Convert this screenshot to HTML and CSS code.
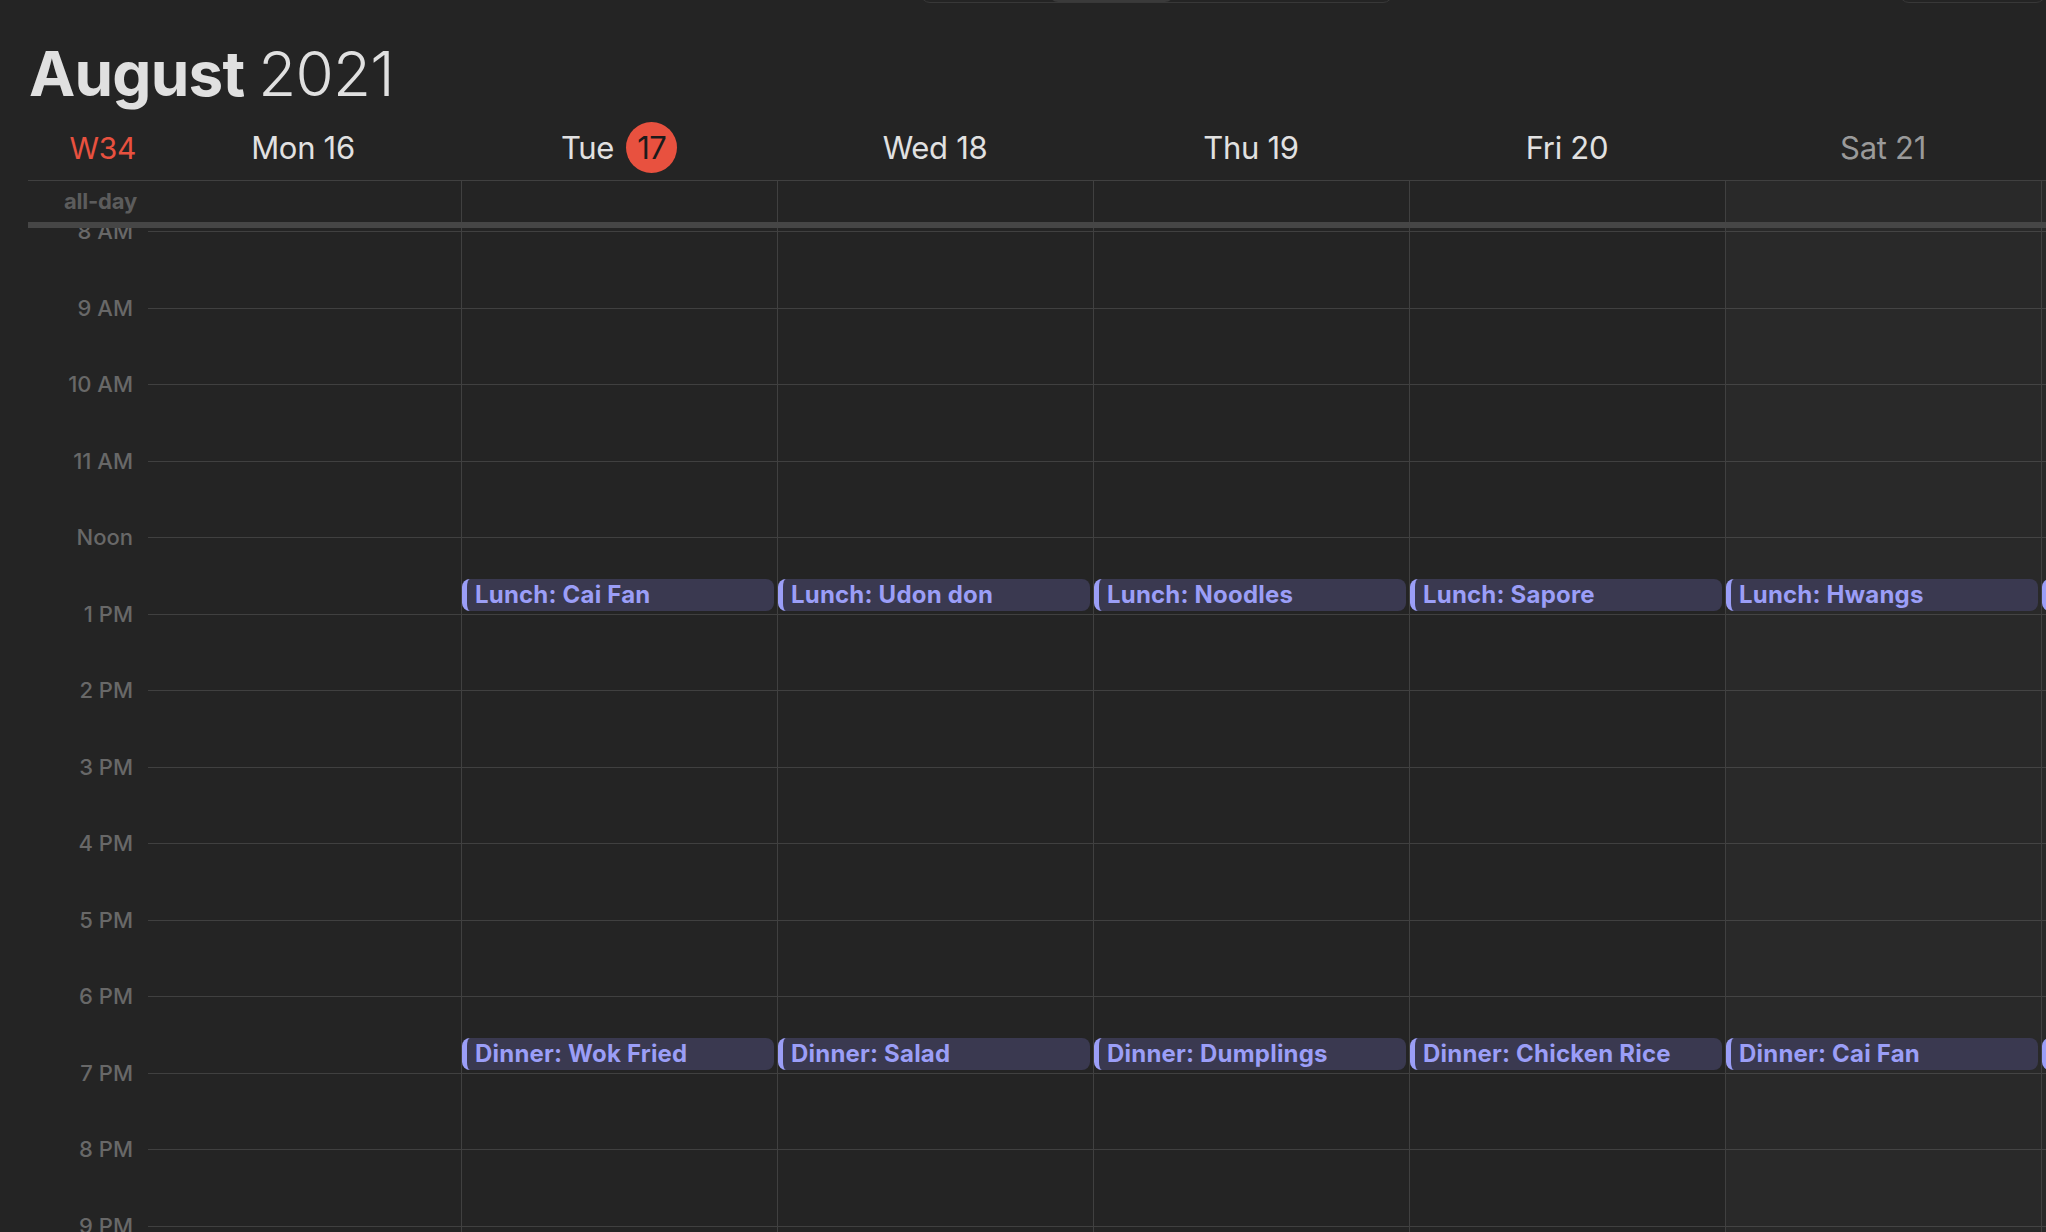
FILE: index.html
```html
<!DOCTYPE html>
<html lang="en">
<head>
<meta charset="utf-8">
<title>Calendar – August 2021</title>
<link rel="stylesheet" href="styles.css">
</head>
<body>
<div class="toolbar">
  <div class="seg seg-views"><div class="seg-active"></div></div>
  <div class="seg seg-search"></div>
</div>

<h1 class="title"><span class="month">August</span> <span class="year">2021</span></h1>

<div class="dayhead">
  <div class="week">W34</div>
  <div class="dname">Mon 16</div>
  <div class="dname today">Tue <span class="today-num">17</span></div>
  <div class="dname">Wed 18</div>
  <div class="dname">Thu 19</div>
  <div class="dname">Fri 20</div>
  <div class="dname weekend-name">Sat 21</div>
  <div class="dname weekend-name">Sun 22</div>
</div>

<div class="allday">
  <div class="allday-label">all-day</div>
  <div class="cell"></div>
  <div class="cell"></div>
  <div class="cell"></div>
  <div class="cell"></div>
  <div class="cell"></div>
  <div class="cell weekend"></div>
  <div class="cell weekend"></div>
</div>

<div class="bar"></div>

<div class="timeline">
  <div class="hours">
    <div class="hour"><span class="hour-label">8 AM</span><span class="hour-line"></span></div>
    <div class="hour"><span class="hour-label">9 AM</span><span class="hour-line"></span></div>
    <div class="hour"><span class="hour-label">10 AM</span><span class="hour-line"></span></div>
    <div class="hour"><span class="hour-label">11 AM</span><span class="hour-line"></span></div>
    <div class="hour"><span class="hour-label">Noon</span><span class="hour-line"></span></div>
    <div class="hour"><span class="hour-label">1 PM</span><span class="hour-line"></span></div>
    <div class="hour"><span class="hour-label">2 PM</span><span class="hour-line"></span></div>
    <div class="hour"><span class="hour-label">3 PM</span><span class="hour-line"></span></div>
    <div class="hour"><span class="hour-label">4 PM</span><span class="hour-line"></span></div>
    <div class="hour"><span class="hour-label">5 PM</span><span class="hour-line"></span></div>
    <div class="hour"><span class="hour-label">6 PM</span><span class="hour-line"></span></div>
    <div class="hour"><span class="hour-label">7 PM</span><span class="hour-line"></span></div>
    <div class="hour"><span class="hour-label">8 PM</span><span class="hour-line"></span></div>
    <div class="hour"><span class="hour-label">9 PM</span><span class="hour-line"></span></div>
    <div class="hour"><span class="hour-label">10 PM</span><span class="hour-line"></span></div>
  </div>
  <div class="days">
    <div class="day"></div>
    <div class="day">
      <div class="event lunch">Lunch: Cai Fan</div>
      <div class="event dinner">Dinner: Wok Fried</div>
    </div>
    <div class="day">
      <div class="event lunch">Lunch: Udon don</div>
      <div class="event dinner">Dinner: Salad</div>
    </div>
    <div class="day">
      <div class="event lunch">Lunch: Noodles</div>
      <div class="event dinner">Dinner: Dumplings</div>
    </div>
    <div class="day">
      <div class="event lunch">Lunch: Sapore</div>
      <div class="event dinner">Dinner: Chicken Rice</div>
    </div>
    <div class="day weekend">
      <div class="event lunch">Lunch: Hwangs</div>
      <div class="event dinner">Dinner: Cai Fan</div>
    </div>
    <div class="day weekend">
      <div class="event lunch">Lunch: Ramen</div>
      <div class="event dinner">Dinner: Pizza</div>
    </div>
  </div>
</div>
</body>
</html>
```

FILE: styles.css
```css
html, body {
  margin: 0;
  padding: 0;
}

body {
  width: 2046px;
  height: 1232px;
  overflow: hidden;
  background: #242424;
  font-family: Inter, "Liberation Sans", "DejaVu Sans", sans-serif;
  color: #e0e0e0;
}

/* cut-off toolbar controls at the very top */
.toolbar {
  display: flex;
  height: 33px;
  margin-top: -30px;
}

.seg {
  box-sizing: border-box;
  height: 33px;
  border: 1px solid #383838;
  border-radius: 10px;
  overflow: hidden;
}

.seg-views {
  margin-left: 920px;
  width: 513px;
}

.seg-active {
  margin-left: 128px;
  width: 125px;
  height: 100%;
  background: #3a3a3a;
  border-radius: 9px;
}

.seg-search {
  margin-left: 506px;
  width: 160px;
}

/* title */
.title {
  margin: 40px 0 0 0;
  padding-left: 29px;
  height: 62px;
  font-size: 62px;
  line-height: 62px;
  letter-spacing: -0.8px;
  color: #e0e0e0;
  white-space: nowrap;
}

.month {
  font-weight: 700;
}

.year {
  font-weight: 300;
}

/* day names */
.dayhead {
  margin-left: 28px;
  height: 75px;
  border-bottom: 1px solid #404040;
  display: grid;
  grid-template-columns: 117px repeat(7, 316px);
  align-items: start;
  overflow: hidden;
}

.week,
.dname {
  margin-top: 27px;
  height: 32px;
  line-height: 32px;
  font-size: 31px;
  font-weight: 400;
  letter-spacing: -0.3px;
  white-space: nowrap;
}

.week {
  font-size: 30px;
  color: #e8513f;
  text-align: right;
  padding-right: 9px;
}

.dname {
  color: #e1e1e1;
  text-align: center;
}

.weekend-name {
  color: #9a9a9a;
}

.today {
  display: flex;
  justify-content: center;
  align-items: center;
  gap: 12px;
}

.today-num {
  width: 51px;
  height: 51px;
  margin: -10px 0 -9px;
  border-radius: 50%;
  background: #e8513f;
  color: #1b1b1b;
  display: flex;
  align-items: center;
  justify-content: center;
  letter-spacing: -0.6px;
}

/* all-day row */
.allday {
  margin-left: 28px;
  height: 41px;
  display: grid;
  grid-template-columns: 117px repeat(7, 316px);
  overflow: hidden;
}

.allday-label {
  text-align: right;
  padding-right: 8px;
  font-size: 22px;
  line-height: 41px;
  font-weight: 700;
  letter-spacing: -0.2px;
  color: #5c5c5c;
}

.cell {
  box-sizing: border-box;
}

.cell + .cell {
  border-left: 1px solid #404040;
}

.weekend {
  background: rgba(255, 255, 255, 0.025);
}

.bar {
  margin-left: 28px;
  height: 6px;
  background: #464646;
}

/* timeline */
.timeline {
  margin-left: 28px;
  height: 1004px;
  overflow: hidden;
  display: grid;
}

.hours {
  grid-area: 1 / 1;
  padding-top: 3px;
}

.hour {
  display: flex;
  height: 76.5px;
}

.hour-label {
  align-self: flex-start;
  flex: 0 0 105px;
  margin-top: -13px;
  height: 26px;
  line-height: 26px;
  text-align: right;
  font-size: 22px;
  font-weight: 500;
  color: #686868;
  white-space: nowrap;
}

.hour-line {
  flex: 1;
  margin-left: 15px;
  border-top: 1px solid #404040;
}

.days {
  grid-area: 1 / 1;
  margin-left: 117px;
  display: flex;
}

.day {
  flex: 0 0 316px;
  box-sizing: border-box;
  position: relative;
}

.day + .day {
  border-left: 1px solid #404040;
}

.event {
  position: absolute;
  left: 0;
  width: 312px;
  height: 32px;
  box-sizing: border-box;
  border-left: 5px solid #9b9ef7;
  border-radius: 8px;
  background: #3a3950;
  color: #9b9ef7;
  padding-left: 8px;
  font-size: 24px;
  font-weight: 700;
  line-height: 32px;
  letter-spacing: 0.2px;
  white-space: nowrap;
  overflow: hidden;
}

.lunch {
  top: 351px;
}

.dinner {
  top: 810px;
}
```
